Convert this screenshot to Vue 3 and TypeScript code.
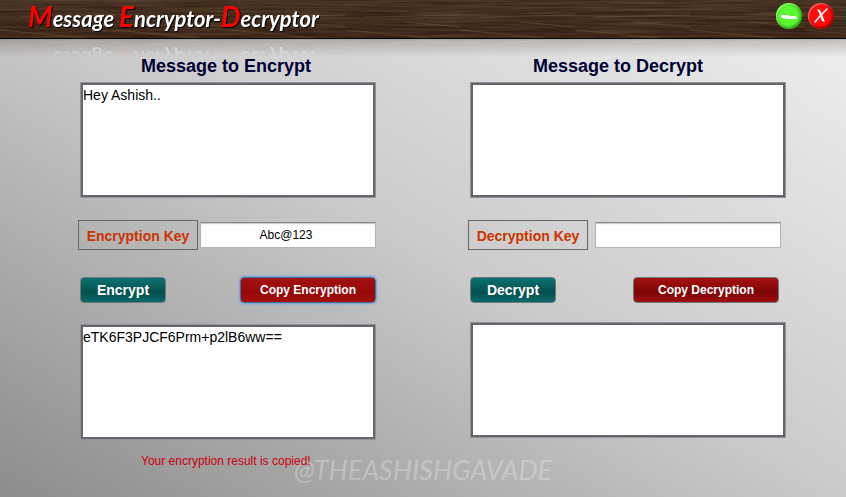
<script setup lang="ts">
import { ref } from 'vue'

interface Panel {
  id: string
  title: string
  keyLabel: string
  action: string
  copy: string
  input: string
  secret: string
  output: string
}

const panels = ref<Panel[]>([
  {
    id: 'encrypt',
    title: 'Message to Encrypt',
    keyLabel: 'Encryption Key',
    action: 'Encrypt',
    copy: 'Copy Encryption',
    input: 'Hey Ashish..',
    secret: 'Abc@123',
    output: 'eTK6F3PJCF6Prm+p2lB6ww==',
  },
  {
    id: 'decrypt',
    title: 'Message to Decrypt',
    keyLabel: 'Decryption Key',
    action: 'Decrypt',
    copy: 'Copy Decryption',
    input: '',
    secret: '',
    output: '',
  },
])

const focused = ref('encrypt')
const status = ref('Your encryption result is copied!')
</script>

<template>
  <div class="window">
    <header class="titlebar">
      <div class="brand">
        <svg class="wood" aria-hidden="true" preserveAspectRatio="none">
          <defs>
            <filter id="grain" x="0" y="0" width="100%" height="100%" color-interpolation-filters="sRGB">
              <feTurbulence type="fractalNoise" baseFrequency="0.012 0.45" numOctaves="3" seed="8" />
              <feColorMatrix
                values="0.5 0 0 0 0.01
                        0.42 0 0 0 -0.03
                        0.36 0 0 0 -0.06
                        0 0 0 0 1"
              />
            </filter>
            <pattern id="streaks" width="115" height="38" patternUnits="userSpaceOnUse">
              <path d="M0 30 L85 38 M60 22 L115 27 M20 17 L115 15" stroke="#8a6b45" stroke-opacity=".35" fill="none" />
              <path d="M0 13 H70 M35 5 H115 M0 24 L60 27" stroke="#20140c" stroke-opacity=".3" fill="none" />
            </pattern>
            <linearGradient id="shade" x1="0" y1="0" x2="0" y2="1">
              <stop offset="0" stop-color="#4c3826" stop-opacity=".6" />
              <stop offset="1" stop-color="#3c2418" stop-opacity=".6" />
            </linearGradient>
          </defs>
          <rect width="100%" height="100%" fill="#443021" />
          <rect width="100%" height="100%" filter="url(#grain)" />
          <rect width="100%" height="100%" fill="url(#shade)" />
          <rect width="100%" height="100%" fill="url(#streaks)" />
        </svg>
        <h1 class="name"><b>M</b>essage <b>E</b>ncryptor-<b>D</b>ecryptor</h1>
      </div>
      <div class="controls">
        <button class="control minimize" type="button" aria-label="Minimize">
          <svg viewBox="0 0 26 26" width="26" height="26" aria-hidden="true">
            <path d="M5 12 L11 12 L14 13 L20 13 L21 16 L12 16 L6 15 L5 14 Z" fill="#fff" />
          </svg>
        </button>
        <button class="control close" type="button" aria-label="Close">
          <svg viewBox="0 0 26 26" width="26" height="26" aria-hidden="true">
            <path d="M9 6 L12 7 L15 14 L17 19 L14 18 L11 10 Z" fill="#fff" />
            <path d="M19 6 L12 13 L7 19" stroke="#fff" stroke-width="1.5" fill="none" stroke-linecap="round" />
          </svg>
        </button>
      </div>
    </header>

    <main class="panels">
      <section v-for="panel in panels" :key="panel.id" class="panel" :class="panel.id">
        <h2 class="heading"><label :for="panel.id + '-message'">{{ panel.title }}</label></h2>
        <textarea :id="panel.id + '-message'" v-model="panel.input" class="message" spellcheck="false"></textarea>
        <div class="key">
          <label class="key-label" :for="panel.id + '-key'">{{ panel.keyLabel }}</label>
          <input :id="panel.id + '-key'" v-model="panel.secret" class="key-input" type="text" spellcheck="false" />
        </div>
        <div class="actions">
          <button class="action run" type="button">{{ panel.action }}</button>
          <button
            class="action copy"
            :class="{ active: focused === panel.id }"
            type="button"
            @click="focused = panel.id"
          >
            {{ panel.copy }}
          </button>
        </div>
        <textarea
          v-model="panel.output"
          class="message"
          :aria-label="panel.action + ' result'"
          spellcheck="false"
          readonly
        ></textarea>
      </section>
    </main>

    <footer class="footer">
      <p class="watermark">@THEASHISHGAVADE</p>
      <p class="status" role="status">{{ status }}</p>
    </footer>
  </div>
</template>

<style>
body {
  margin: 0;
}
</style>

<style scoped>
.window {
  box-sizing: border-box;
  min-height: 100vh;
  display: flex;
  flex-direction: column;
  overflow: hidden;
  font-family: "Liberation Sans", Arial, sans-serif;
  background: linear-gradient(to top right, #8c8c8c, #cacaca 50%, #f0f0f0);
}

.titlebar {
  display: grid;
}

.brand,
.controls {
  grid-area: 1 / 1;
}

.brand {
  display: grid;
  background: #3a2719;
  border-bottom: 1px solid #0c0806;
  -webkit-box-reflect: below 0 linear-gradient(transparent 55%, rgba(0, 0, 0, 0.25));
}

.wood,
.name {
  grid-area: 1 / 1;
}

.wood {
  display: block;
  width: 100%;
  height: 38px;
}

.name {
  position: relative;
  margin: 0;
  padding-left: 28px;
  align-self: center;
  font: italic 700 22px/38px Lato, sans-serif;
  color: #fff;
  text-shadow: 1px 1px 1px #000;
}

.name b {
  font-size: 28px;
  line-height: 0;
  font-weight: 700;
  color: #f00;
}

.controls {
  position: relative;
  justify-self: end;
  align-self: start;
  display: flex;
  gap: 6px;
  padding: 3px 12px 0 0;
}

.control {
  width: 26px;
  height: 26px;
  padding: 0;
  border: 0;
  border-radius: 50%;
}

.control svg {
  display: block;
}

.minimize {
  background: radial-gradient(circle, #5cf732 50%, #43d41f 70%);
  box-shadow: inset 1px 1px 2px #a5ff88, inset -1px -1px 3px #1f8a0b;
}

.close {
  background: radial-gradient(circle, #ff0d0d 50%, #d80000 70%);
  box-shadow: inset 1px 1px 2px #ff7b7b, inset -1px -1px 3px #8a0000;
}

.panels {
  display: grid;
  grid-template-columns: 296fr 316fr;
  gap: 94px;
  padding: 15px 60px 0 80px;
}

.panel {
  display: flex;
  flex-direction: column;
}

.heading {
  margin: 0 0 4px;
  font-size: 18px;
  line-height: 24px;
  text-align: center;
  color: #000033;
}

.encrypt .heading {
  padding-right: 4px;
}

.decrypt .heading {
  padding-right: 20px;
}

.message {
  box-sizing: border-box;
  width: 100%;
  height: 116px;
  margin: 0;
  padding: 1px 0;
  border: 3px solid #666;
  outline: 1px solid #9091a0;
  outline-offset: -1px;
  resize: none;
  background: #fff;
  color: #000;
  font: 14px/18px "Liberation Sans", Arial, sans-serif;
}

.key {
  display: flex;
  align-items: center;
  margin: 22px 0 0 -2px;
}

.key-label {
  box-sizing: border-box;
  flex: none;
  width: 120px;
  height: 30px;
  border: 1px solid #666;
  font-size: 14px;
  font-weight: 700;
  line-height: 30px;
  text-align: center;
  color: #cc3300;
}

.key-input {
  box-sizing: border-box;
  flex: 1;
  min-width: 0;
  height: 26px;
  margin-left: 2px;
  padding: 0 4px 0 0;
  border: 1px solid #b5b5b5;
  border-top-color: #8c8c8c;
  border-radius: 0;
  box-shadow: inset 0 1px 1px #c4c4c4;
  background: #fff;
  color: #000;
  font: 12px "Liberation Sans", Arial, sans-serif;
  text-align: center;
}

.decrypt .key-input {
  margin: 0 5px 0 7px;
}

.actions {
  display: flex;
  justify-content: space-between;
  margin: 27px 0 21px;
}

.decrypt .actions {
  margin-bottom: 19px;
  padding-right: 7px;
}

.action {
  box-sizing: border-box;
  height: 26px;
  padding: 0;
  border: 1px solid #6d7a7c;
  border-radius: 4px;
  color: #fff;
  font-family: "Liberation Sans", Arial, sans-serif;
  font-weight: 700;
}

.run {
  width: 86px;
  font-size: 14px;
  background: linear-gradient(#0b7270, #054f4f 60%, #0a6a69);
}

.copy {
  width: 146px;
  font-size: 12px;
  background: linear-gradient(#a61111, #7d0606 60%, #a00f0f);
}

.encrypt .copy {
  width: 136px;
}

.copy.active {
  border-color: #4a6f9c;
  box-shadow: 0 0 2px 1px #6ba3dc;
  background: linear-gradient(#a31212, #960808 60%, #a31010);
}

.footer {
  display: grid;
  padding-top: 13px;
}

.watermark,
.status {
  grid-area: 1 / 1;
  margin: 0;
}

.watermark {
  text-align: center;
  font: italic 400 27px/34px Lato, sans-serif;
  color: rgba(255, 255, 255, 0.27);
}

.status {
  position: relative;
  padding-left: 141px;
  font-size: 12px;
  line-height: 16px;
  color: #cc0011;
}
</style>
